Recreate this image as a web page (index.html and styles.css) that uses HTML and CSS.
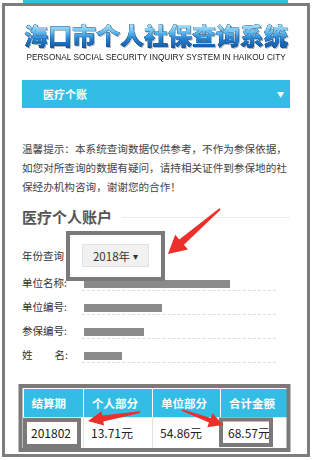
FILE: index.html
```html
<!DOCTYPE html>
<html lang="zh-CN">
<head>
<meta charset="utf-8">
<title>海口市个人社保查询系统</title>
<link rel="stylesheet" href="styles.css">
</head>
<body>
<div class="topbar"></div>
<div class="frame">
  <h1 class="title">海口市个人社保查询系统</h1>
  <div class="subtitle"><span>PERSONAL SOCIAL SECURITY INQUIRY SYSTEM IN HAIKOU CITY</span></div>
  <div class="menubar"><span>医疗个账</span><span class="caret">▼</span></div>
  <p class="hint">温馨提示：本系统查询数据仅供参考，不作为参保依据，如您对所查询的数据有疑问，请持相关证件到参保地的社保经办机构咨询，谢谢您的合作！</p>
  <h2 class="section">医疗个人账户</h2>
  <div class="yearrow">
    <span class="label">年份查询</span>
    <span class="select">2018年 <span class="dd">▾</span></span>
  </div>
  <div class="row"><span class="label">单位名称:</span><span class="value"><i class="blur" style="width:146px"></i></span></div>
  <div class="row"><span class="label">单位编号:</span><span class="value"><i class="blur" style="width:78px"></i></span></div>
  <div class="row"><span class="label">参保编号:</span><span class="value"><i class="blur" style="width:60px"></i></span></div>
  <div class="row"><span class="label label-wide"><span>姓</span><span>名:</span></span><span class="value"><i class="blur" style="width:38px"></i></span></div>
  <table class="grid">
    <thead>
      <tr><th class="c1">结算期</th><th class="c2">个人部分</th><th class="c3">单位部分</th><th class="c4">合计金额</th></tr>
    </thead>
    <tbody>
      <tr><td>201802</td><td>13.71元</td><td>54.86元</td><td>68.57元</td></tr>
    </tbody>
  </table>
</div>
<svg class="marks" width="313" height="460" viewBox="0 0 313 460">
  <g fill="none" stroke="#7a7a7a" stroke-width="4">
    <rect x="68" y="233" width="95" height="46"/>
    <rect x="20.5" y="386" width="268" height="64"/>
    <rect x="25" y="420" width="54" height="26"/>
    <rect x="221" y="419.5" width="50" height="25.5"/>
  </g>
  <g fill="#ec2f2a">
    <polygon points="219.4,208.2 179.3,239.6 175.2,234.8 168,254 188,249.6 183.9,244.8 220.6,209.8"/>
    <polygon points="140,411.3 102.3,415.4 101.6,411.3 88,421 104,425.6 103.3,421.4 140,412.9"/>
    <polygon points="182.3,409.2 210.8,417.9 212.6,413.2 223,425 207.3,427.2 209,422.5 181.7,410.8"/>
  </g>
</svg>
</body>
</html>
```
FILE: styles.css
```css
* { box-sizing: border-box; }
html, body { margin: 0; padding: 0; background: #fff; }
body {
  width: 313px;
  height: 460px;
  position: relative;
  overflow: hidden;
  font-family: "Noto Sans CJK SC", "Noto Sans", sans-serif;
  color: #333;
}
.topbar {
  height: 3px;
  margin: 0 25px 0 23px;
  background: #3cbde6;
}
.frame {
  margin: 0 3px 0 2px;
  height: 454px;
  border: 3px solid #7d7d7d;
  padding: 0 17px 0 17px;
}
.title {
  margin: 16px 0 0;
  height: 26px;
  line-height: 26px;
  font-size: 24px;
  font-weight: 900;
  text-align: center;
  letter-spacing: 0;
  background: linear-gradient(180deg, #c8efff 0%, #6cc4f3 35%, #2383d4 65%, #1457a6 100%);
  -webkit-background-clip: text;
  background-clip: text;
  color: transparent;
  filter: drop-shadow(0 0 0.5px #163f70) drop-shadow(0 0 0.5px #163f70) drop-shadow(1px 1px 0 rgba(120,140,160,0.6));
}
.subtitle {
  margin-top: 3px;
  height: 11px;
  line-height: 11px;
  display: flex;
  justify-content: center;
  white-space: nowrap;
}
.subtitle span {
  flex: none;
  display: block;
  font-family: "Liberation Sans", "Noto Sans", sans-serif;
  font-size: 9.5px;
  color: #222;
  transform: scaleX(0.87);
  transform-origin: center;
}
.menubar {
  margin-top: 18px;
  height: 28px;
  background: #33bde4;
  color: #fff;
  display: flex;
  align-items: center;
  justify-content: space-between;
  padding: 0 6px 0 21px;
  font-size: 11px;
  font-weight: bold;
}
.menubar .caret { font-size: 7px; }
.hint {
  margin: 31px -2px 0 0;
  font-size: 10.6px;
  line-height: 19px;
  color: #444;
  letter-spacing: 0;
}
.section {
  margin: 10px 0 0;
  height: 22px;
  line-height: 22px;
  font-size: 15px;
  font-weight: bold;
  color: #555;
  display: flex;
  align-items: center;
}
.section::after {
  content: "";
  flex: 1;
  height: 1px;
  background: #ececec;
  margin-left: 10px;
}
.yearrow {
  margin-top: 16px;
  height: 23px;
  display: flex;
  align-items: center;
}
.label {
  width: 60px;
  flex: none;
  font-size: 10.5px;
  color: #333;
}
.select {
  height: 23px;
  width: 67px;
  background: #f1f1f1;
  border: 1px solid #e2e2e2;
  display: flex;
  align-items: center;
  justify-content: center;
  gap: 3px;
  font-size: 11.5px;
  color: #333;
}
.select .dd { font-size: 10px; }
.row {
  height: 24px;
  display: flex;
}
.row .label {
  padding-top: 8px;
  line-height: 16px;
}
.label-wide {
  display: flex;
  justify-content: space-between;
  padding-right: 14px;
}
.value {
  flex: 1;
  margin-right: 14px;
  border-bottom: 1px dashed #dcdcdc;
  padding: 13px 0 0 2px;
}
.blur {
  display: block;
  height: 8px;
  background: #8a8a8a;
  filter: blur(0.7px);
}
.grid {
  margin: 26px 0 0 1px;
  width: 264px;
  border-collapse: collapse;
  table-layout: fixed;
}
.grid th {
  height: 28px;
  background: #33bde4;
  color: #fff;
  font-size: 11.5px;
  font-weight: bold;
  text-align: left;
  padding: 0 0 0 8px;
  border-left: 1px solid #fff;
}
.grid th.c1 { width: 60px; border-left: none; }
.grid th.c2 { width: 69px; }
.grid th.c3 { width: 68px; }
.grid th.c4 { width: 67px; }
.grid td {
  height: 31px;
  font-size: 12px;
  color: #222;
  padding: 0 0 0 7px;
  border: 1px solid #e3e3e3;
}
.marks {
  position: absolute;
  left: 0;
  top: 0;
  pointer-events: none;
}
```
